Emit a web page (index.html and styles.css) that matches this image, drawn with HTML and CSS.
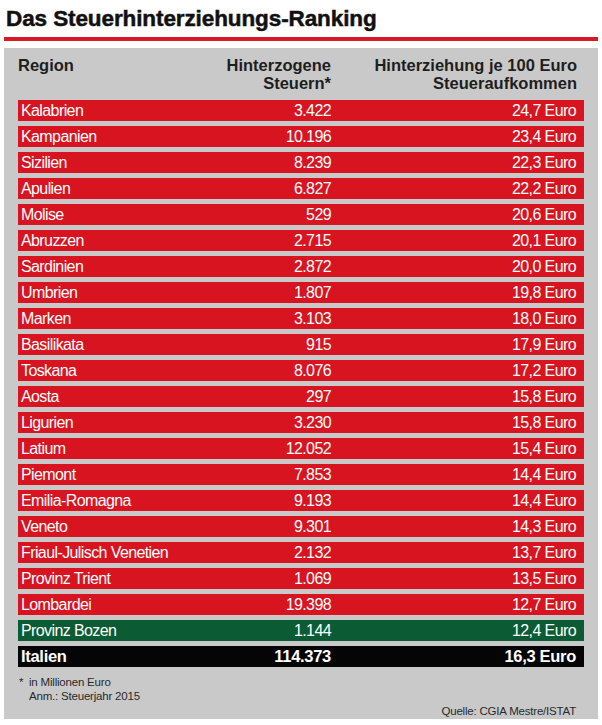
FILE: index.html
```html
<!DOCTYPE html>
<html lang="de">
<head>
<meta charset="utf-8">
<title>Das Steuerhinterziehungs-Ranking</title>
<link rel="stylesheet" href="styles.css">
</head>
<body>
<h1 class="title">Das Steuerhinterziehungs-Ranking</h1>
<div class="rule"></div>
<div class="panel">
  <div class="head">
    <div class="h-region">Region</div>
    <div class="h-num">Hinterzogene<br>Steuern*</div>
    <div class="h-euro">Hinterziehung je 100 Euro<br>Steueraufkommen</div>
  </div>
  <div class="rows">
    <div class="row red"><span>Kalabrien</span><span class="num">3.422</span><span class="num">24,7 Euro</span></div>
    <div class="row red"><span>Kampanien</span><span class="num">10.196</span><span class="num">23,4 Euro</span></div>
    <div class="row red"><span>Sizilien</span><span class="num">8.239</span><span class="num">22,3 Euro</span></div>
    <div class="row red"><span>Apulien</span><span class="num">6.827</span><span class="num">22,2 Euro</span></div>
    <div class="row red"><span>Molise</span><span class="num">529</span><span class="num">20,6 Euro</span></div>
    <div class="row red"><span>Abruzzen</span><span class="num">2.715</span><span class="num">20,1 Euro</span></div>
    <div class="row red"><span>Sardinien</span><span class="num">2.872</span><span class="num">20,0 Euro</span></div>
    <div class="row red"><span>Umbrien</span><span class="num">1.807</span><span class="num">19,8 Euro</span></div>
    <div class="row red"><span>Marken</span><span class="num">3.103</span><span class="num">18,0 Euro</span></div>
    <div class="row red"><span>Basilikata</span><span class="num">915</span><span class="num">17,9 Euro</span></div>
    <div class="row red"><span>Toskana</span><span class="num">8.076</span><span class="num">17,2 Euro</span></div>
    <div class="row red"><span>Aosta</span><span class="num">297</span><span class="num">15,8 Euro</span></div>
    <div class="row red"><span>Ligurien</span><span class="num">3.230</span><span class="num">15,8 Euro</span></div>
    <div class="row red"><span>Latium</span><span class="num">12.052</span><span class="num">15,4 Euro</span></div>
    <div class="row red"><span>Piemont</span><span class="num">7.853</span><span class="num">14,4 Euro</span></div>
    <div class="row red"><span>Emilia-Romagna</span><span class="num">9.193</span><span class="num">14,4 Euro</span></div>
    <div class="row red"><span>Veneto</span><span class="num">9.301</span><span class="num">14,3 Euro</span></div>
    <div class="row red"><span>Friaul-Julisch Venetien</span><span class="num">2.132</span><span class="num">13,7 Euro</span></div>
    <div class="row red"><span>Provinz Trient</span><span class="num">1.069</span><span class="num">13,5 Euro</span></div>
    <div class="row red"><span>Lombardei</span><span class="num">19.398</span><span class="num">12,7 Euro</span></div>
    <div class="row green"><span>Provinz Bozen</span><span class="num">1.144</span><span class="num">12,4 Euro</span></div>
    <div class="row total"><span>Italien</span><span class="num">114.373</span><span class="num">16,3 Euro</span></div>
  </div>
  <div class="foot">
    <div class="note"><span class="star">*</span><span>in Millionen Euro</span></div>
    <div class="note"><span class="star"></span><span>Anm.: Steuerjahr 2015</span></div>
    <div class="source">Quelle: CGIA Mestre/ISTAT</div>
  </div>
</div>
</body>
</html>
```
FILE: styles.css
```css
html, body {
  margin: 0;
  padding: 0;
  background: #ffffff;
}
body {
  font-family: "Liberation Sans", Arial, sans-serif;
  width: 602px;
  height: 725px;
  overflow: hidden;
}
.title {
  margin: 6px 0 0 6px;
  font-size: 22.5px;
  line-height: 26px;
  font-weight: bold;
  color: #111111;
  letter-spacing: -0.1px;
  -webkit-text-stroke: 0.5px #111111;
}
.rule {
  margin: 5px 4px 0 4px;
  height: 4px;
  background: #d51a26;
}
.panel {
  margin: 7px 4px 0 4px;
  height: 671px;
  box-sizing: border-box;
  background: #c9c9c9;
  padding: 8px 14px 0 14px;
  display: flex;
  flex-direction: column;
}
.head {
  display: grid;
  grid-template-columns: 200px 113px 1fr;
  font-size: 16.5px;
  line-height: 18px;
  font-weight: bold;
  color: #1e1e1e;
  padding-right: 7px;
}
.h-num, .h-euro {
  text-align: right;
}
.rows {
  margin-top: 8px;
  display: flex;
  flex-direction: column;
  gap: 5px;
}
.row {
  display: grid;
  grid-template-columns: 200px 110px 1fr;
  height: 21px;
  line-height: 21px;
  font-size: 16px;
  color: #ffffff;
  padding: 0 8px 0 3px;
  letter-spacing: -0.6px;
}
.row .num {
  text-align: right;
}
.red {
  background: #d7141f;
}
.green {
  background: #0b5c34;
}
.total {
  background: #050505;
  font-weight: bold;
  font-size: 16.5px;
  letter-spacing: -0.3px;
}
.foot {
  margin-top: 8px;
  font-size: 11.5px;
  line-height: 14.3px;
  color: #2a2a2a;
  letter-spacing: -0.2px;
}
.note {
  display: flex;
}
.star {
  width: 10px;
  padding-left: 1px;
}
.source {
  text-align: right;
  padding-right: 8px;
}
```
